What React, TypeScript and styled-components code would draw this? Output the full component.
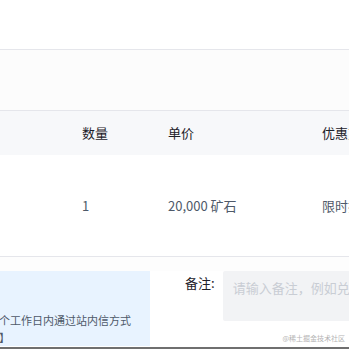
import styled, { createGlobalStyle } from 'styled-components';

const GlobalStyle = createGlobalStyle`
  html, body {
    margin: 0;
    padding: 0;
    background: #fff;
    overflow: hidden;
  }

  body {
    font-family: 'Noto Sans CJK SC', 'Noto Sans', sans-serif;
  }

  * {
    box-sizing: border-box;
  }
`;

const Page = styled.div`
  position: relative;
  width: 349px;
  height: 349px;
  overflow: hidden;
  background: #fff;
  border-bottom: 2px solid #6f6f6f;
`;

const TopBar = styled.div`
  height: 50px;
  border-bottom: 1px solid #e5e6eb;
`;

const Band = styled.div`
  height: 61px;
  background: #fcfcfc;
  border-bottom: 1px solid #e5e6eb;
`;

const Row = styled.div<{ $head?: boolean }>`
  display: flex;
  align-items: center;
  width: 349px;
  overflow: hidden;
  height: ${(p) => (p.$head ? '44px' : '102px')};
  background: ${(p) => (p.$head ? '#f7f8fa' : '#fff')};
  border-bottom: ${(p) => (p.$head ? 'none' : '1px solid #e5e6eb')};
  font-size: 13px;
  line-height: 18px;
  color: ${(p) => (p.$head ? '#1d2129' : '#4e5969')};
  white-space: nowrap;
`;

const Cell = styled.div<{ $w: number }>`
  flex: none;
  width: ${(p) => p.$w}px;
`;

const Gap = styled.div`
  height: 14px;
  background: #fdfdfd;
`;

const Footer = styled.div`
  display: flex;
  align-items: flex-start;
  height: 76px;
`;

const Notice = styled.div`
  flex: none;
  width: 365px;
  height: 75px;
  margin-left: -215px;
  padding: 18px 19px 0 16px;
  background: #e8f3ff;
  overflow: hidden;
  font-size: 11px;
  line-height: 17px;
  color: #4e5969;
`;

const NoticeTitle = styled.div`
  height: 20px;
  margin-bottom: 3px;
  font-size: 12px;
  line-height: 20px;
  color: #1d2129;
`;

const RemarkLabel = styled.label`
  flex: none;
  margin: 3px 8px 0 35px;
  font-size: 13px;
  line-height: 18px;
  color: #1d2129;
`;

const RemarkInput = styled.textarea`
  flex: none;
  width: 420px;
  height: 50px;
  padding: 8px 10px;
  border: none;
  border-radius: 2px;
  background: #f2f3f5;
  resize: none;
  outline: none;
  font-family: inherit;
  font-size: 13px;
  line-height: 18px;
  color: #1d2129;

  &::placeholder {
    color: #c9cdd4;
  }
`;

const Watermark = styled.span`
  position: absolute;
  right: 4px;
  bottom: 5px;
  font-size: 7px;
  line-height: 8px;
  color: #b4b4b4;
`;

const widths = [82, 86, 154, 120];
const columns = ['', '数量', '单价', '优惠方式'];
const goods = ['', '1', '20,000 矿石', '限时折扣'];

export default function App() {
  return (
    <Page>
      <GlobalStyle />
      <TopBar />
      <Band />
      <Row $head>
        {columns.map((c, i) => (
          <Cell key={i} $w={widths[i]}>
            {c}
          </Cell>
        ))}
      </Row>
      <Row>
        {goods.map((g, i) => (
          <Cell key={i} $w={widths[i]}>
            {g}
          </Cell>
        ))}
      </Row>
      <Gap />
      <Footer>
        <Notice>
          <NoticeTitle>兑换须知</NoticeTitle>
          温馨提示：商品兑换成功后，我们将于三个工作日内通过站内信方式与您确认收货地址等信息，请留意【消息】
        </Notice>
        <RemarkLabel htmlFor="remark">备注:</RemarkLabel>
        <RemarkInput id="remark" placeholder="请输入备注，例如兑换商品的尺码、颜色等" />
      </Footer>
      <Watermark>@稀土掘金技术社区</Watermark>
    </Page>
  );
}
